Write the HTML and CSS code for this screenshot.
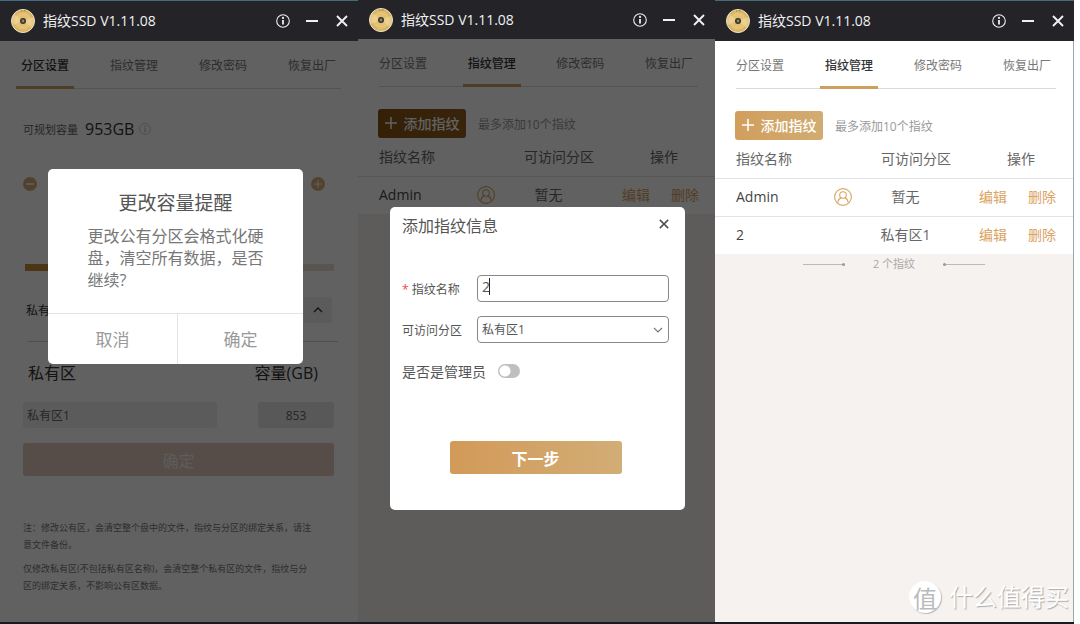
FILE: index.html
```html
<!DOCTYPE html>
<html lang="zh-CN">
<head>
<meta charset="utf-8">
<meta name="viewport" content="width=device-width, initial-scale=1">
<title>指纹SSD V1.11.08</title>
<link rel="stylesheet" href="styles.css">
</head>
<body>
<svg class="sprite" aria-hidden="true">
  <defs>
    <radialGradient id="gold" cx="50%" cy="50%" r="50%">
      <stop offset="0" stop-color="#d9b566"/><stop offset=".6" stop-color="#e6c679"/><stop offset="1" stop-color="#d2a95a"/>
    </radialGradient>
    <symbol id="disc" viewBox="0 0 24 24">
      <circle cx="12" cy="12" r="11.5" fill="url(#gold)" stroke="#f1e6cb"/>
      <path d="M12 12 3 5a12 12 0 0 0-1 11zM12 12l9 7a12 12 0 0 0 1-11z" fill="#f6e3ae" opacity=".45"/>
      <circle cx="12" cy="12" r="3" fill="#3a3328"/>
      <circle cx="12" cy="12" r="1.4" fill="#8d8778"/>
      <path d="M10 2h1M12.5 1.8h2" stroke="#8b6b2b" stroke-width=".8"/>
    </symbol>
    <symbol id="info" viewBox="0 0 14 14">
      <circle cx="7" cy="7" r="6.3" fill="none" stroke="currentColor" stroke-width="1.1"/>
      <path d="M7 6v4.6" fill="none" stroke="currentColor" stroke-width="1.8"/>
      <circle cx="7" cy="3.9" r="1.1" fill="currentColor"/>
    </symbol>
    <symbol id="min" viewBox="0 0 12 12"><path d="M0 6h12" stroke="currentColor" stroke-width="2"/></symbol>
    <symbol id="close" viewBox="0 0 12 12"><path d="m1 1 10 10M11 1 1 11" stroke="currentColor" stroke-width="1.9"/></symbol>
    <symbol id="plus" viewBox="0 0 12 12"><path d="M0 6h12M6 0v12" stroke="currentColor" stroke-width="1.5"/></symbol>
    <symbol id="user" viewBox="0 0 18 18">
      <g fill="none" stroke="currentColor" stroke-width="1.1">
        <circle cx="9" cy="9" r="8.4"/><circle cx="9" cy="7" r="3.3"/>
        <path d="M3.8 14.6c.3-2.6 1.8-4.2 3.6-4.7M14.2 14.6c-.3-2.6-1.8-4.2-3.6-4.7"/>
      </g>
    </symbol>
  </defs>
</svg>
<main class="board">

  <section class="window window-strip">
    <header class="titlebar">
      <svg class="logo"><use href="#disc"/></svg>
      <h1 class="app-name">指纹SSD V1.11.08</h1>
      <button class="win-btn" aria-label="关于"><svg class="i14"><use href="#info"/></svg></button>
      <button class="win-btn" aria-label="最小化"><svg class="i12"><use href="#min"/></svg></button>
      <button class="win-btn" aria-label="关闭"><svg class="i12"><use href="#close"/></svg></button>
    </header>
    <div class="content">
      <nav class="tabs">
        <a class="tab active" href="#">分区设置</a><a class="tab" href="#">指纹管理</a><a class="tab" href="#">修改密码</a><a class="tab" href="#">恢复出厂</a>
      </nav>
      <div class="settings">
        <p class="capacity"><span class="capacity-label">可规划容量</span><span class="capacity-value">953GB</span><svg class="capacity-info"><use href="#info"/></svg></p>
        <div class="stepper">
          <button class="round" aria-label="减少"><svg class="i8"><use href="#min"/></svg></button>
          <button class="round" aria-label="增加"><svg class="i8"><use href="#plus"/></svg></button>
        </div>
        <input class="slider" type="range" min="0" max="953" value="100" aria-label="公有区容量">
        <div class="fold">
          <span>私有</span>
          <button class="fold-btn" aria-label="收起"><svg class="i10" viewBox="0 0 10 10"><path d="m1 7 4-4 4 4" fill="none" stroke="currentColor" stroke-width="1.4"/></svg></button>
        </div>
        <div class="pair pair-head"><span>私有区</span><span>容量(GB)</span></div>
        <div class="pair">
          <input class="box" type="text" value="私有区1" aria-label="私有区名称">
          <input class="box box-num" type="text" value="853" aria-label="容量(GB)">
        </div>
        <button class="submit">确定</button>
        <div class="notes">
          <p>注：修改公有区，会清空整个盘中的文件，指纹与分区的绑定关系，请注<br>意文件备份。</p>
          <p>仅修改私有区(不包括私有区名称)，会清空整个私有区的文件，指纹与分<br>区的绑定关系，不影响公有区数据。</p>
        </div>
      </div>
      <div class="shade"></div>
      <div class="dialog confirm" role="dialog" aria-labelledby="confirm-title">
        <h2 class="confirm-title" id="confirm-title">更改容量提醒</h2>
        <p class="confirm-text">更改公有分区会格式化硬盘，清空所有数据，是否继续?</p>
        <div class="confirm-actions"><button class="flat">取消</button><button class="flat">确定</button></div>
      </div>
    </div>
  </section>

  <section class="window">
    <header class="titlebar">
      <svg class="logo"><use href="#disc"/></svg>
      <h1 class="app-name">指纹SSD V1.11.08</h1>
      <button class="win-btn" aria-label="关于"><svg class="i14"><use href="#info"/></svg></button>
      <button class="win-btn" aria-label="最小化"><svg class="i12"><use href="#min"/></svg></button>
      <button class="win-btn" aria-label="关闭"><svg class="i12"><use href="#close"/></svg></button>
    </header>
    <div class="content content-list">
      <div class="sheet">
        <nav class="tabs">
          <a class="tab" href="#">分区设置</a><a class="tab active" href="#">指纹管理</a><a class="tab" href="#">修改密码</a><a class="tab" href="#">恢复出厂</a>
        </nav>
        <div class="toolbar"><button class="add add-pressed"><svg class="i12"><use href="#plus"/></svg>添加指纹</button><span class="hint">最多添加10个指纹</span></div>
        <table class="prints">
          <thead><tr><th class="c-name">指纹名称</th><th class="c-role"></th><th class="c-zone">可访问分区</th><th class="c-ops">操作</th></tr></thead>
          <tbody>
            <tr><td class="c-name">Admin</td><td class="c-role"><svg class="i18"><use href="#user"/></svg></td><td class="c-zone">暂无</td><td class="c-ops"><a class="op" href="#">编辑</a><a class="op" href="#">删除</a></td></tr>
          </tbody>
        </table>
      </div>
      <div class="shade"></div>
      <form class="dialog editor" role="dialog" aria-labelledby="editor-title">
        <div class="editor-head"><h2 class="editor-title" id="editor-title">添加指纹信息</h2><button class="editor-close" type="button" aria-label="关闭"><svg class="i10"><use href="#close"/></svg></button></div>
        <div class="field"><label class="field-label" for="fp-name"><span class="star">*</span> 指纹名称</label><span class="control"><input class="entry" id="fp-name" type="text" value="2"><span class="caret"></span></span></div>
        <div class="field"><label class="field-label" for="fp-zone">可访问分区</label><span class="control"><select class="entry" id="fp-zone"><option>私有区1</option></select><svg class="chevron" viewBox="0 0 10 10"><path d="m1 3 4 4 4-4" fill="none" stroke="currentColor" stroke-width="1.1"/></svg></span></div>
        <div class="field field-admin"><label for="fp-admin">是否是管理员</label><input class="switch" id="fp-admin" type="checkbox" role="switch"></div>
        <button class="next" type="button">下一步</button>
      </form>
    </div>
  </section>

  <section class="window window-strip">
    <header class="titlebar">
      <svg class="logo"><use href="#disc"/></svg>
      <h1 class="app-name">指纹SSD V1.11.08</h1>
      <button class="win-btn" aria-label="关于"><svg class="i14"><use href="#info"/></svg></button>
      <button class="win-btn" aria-label="最小化"><svg class="i12"><use href="#min"/></svg></button>
      <button class="win-btn" aria-label="关闭"><svg class="i12"><use href="#close"/></svg></button>
    </header>
    <div class="content content-list content-edge">
      <div class="sheet">
        <nav class="tabs">
          <a class="tab" href="#">分区设置</a><a class="tab active" href="#">指纹管理</a><a class="tab" href="#">修改密码</a><a class="tab" href="#">恢复出厂</a>
        </nav>
        <div class="toolbar"><button class="add"><svg class="i12"><use href="#plus"/></svg>添加指纹</button><span class="hint">最多添加10个指纹</span></div>
        <table class="prints">
          <thead><tr><th class="c-name">指纹名称</th><th class="c-role"></th><th class="c-zone">可访问分区</th><th class="c-ops">操作</th></tr></thead>
          <tbody>
            <tr><td class="c-name">Admin</td><td class="c-role"><svg class="i18"><use href="#user"/></svg></td><td class="c-zone">暂无</td><td class="c-ops"><a class="op" href="#">编辑</a><a class="op" href="#">删除</a></td></tr>
            <tr><td class="c-name">2</td><td class="c-role"></td><td class="c-zone">私有区1</td><td class="c-ops"><a class="op" href="#">编辑</a><a class="op" href="#">删除</a></td></tr>
          </tbody>
        </table>
      </div>
      <p class="count"><span class="rule rule-left"></span><span>2 个指纹</span><span class="rule rule-right"></span></p>
      <div class="watermark"><span class="seal">值</span><span>什么值得买</span></div>
    </div>
  </section>
</main>
</body>
</html>
```
FILE: styles.css
```css
* { box-sizing: border-box; }
body, h1, h2, p { margin: 0; }
body {
  background: #fff;
  color: #666;
  font-family: "Open Sans", "Noto Sans CJK SC", sans-serif;
  font-size: 12px;
}
button, input, select { font: inherit; color: inherit; border: 0; margin: 0; padding: 0; background: none; }
a { color: inherit; text-decoration: none; }
svg { display: block; flex: none; }
.sprite { position: absolute; width: 0; height: 0; }
.i8 { width: 8px; height: 8px; }
.i10 { width: 10px; height: 10px; }
.i12 { width: 12px; height: 12px; }
.i14 { width: 14px; height: 14px; }
.i18 { width: 18px; height: 18px; }

.board {
  display: grid;
  grid-template-columns: 358fr 357fr 359fr;
  min-height: 100vh;
  padding-right: 6px;
}
.window { display: flex; flex-direction: column; border-bottom: 2px solid #171b20; }
.window-strip { border-top: 1px solid #45697d; }

.titlebar {
  display: flex;
  align-items: center;
  height: 39px;
  padding: 0 10px 0 11px;
  background: #232328;
  color: #f1f1f1;
}
.window-strip .titlebar { height: 40px; }
.logo { width: 24px; height: 24px; }
.app-name { flex: 1; margin-left: 8px; font-size: 14px; font-weight: 400; line-height: 20px; white-space: nowrap; }
.win-btn { display: grid; place-items: center; width: 12px; height: 20px; margin-left: 18px; }

.content { position: relative; flex: 1; background: #fff; }
.content-list { background: #f5f2f0; }
.content-edge { border-right: 1px solid #9aa7ad; }
.sheet { background: #fff; }

.tabs {
  display: flex;
  justify-content: space-between;
  margin: 0 17px 0 16px;
  height: 48px;
  background: linear-gradient(#d9d9d9, #d9d9d9) right bottom / calc(100% - 5px) 1px no-repeat;
}
.tab { padding: 15px 5px 0; line-height: 20px; border-bottom: 3px solid transparent; color: #777; }
.tab.active { border-color: #cf9f5f; color: #333; font-weight: 500; }

.settings { padding: 0 24px 0 23px; }
.capacity { display: flex; align-items: center; gap: 7px; height: 24px; margin-top: 28px; }
.capacity-label { font-size: 11px; }
.capacity-value { font-size: 16px; color: #333; }
.capacity-info { width: 12px; height: 12px; margin-left: -2px; color: #ccc; }
.stepper { display: flex; justify-content: space-between; margin-top: 36px; padding-right: 9px; }
.round { display: grid; place-items: center; width: 14px; height: 14px; border-radius: 50%; background: #d8ae78; color: #fff; }
.slider {
  appearance: none;
  display: block;
  width: calc(100% - 2px);
  height: 7px;
  margin: 73px 0 0 2px;
  background: linear-gradient(90deg, #c98a3c 35%, #e6dcd2 35%);
}
.slider::-webkit-slider-thumb { appearance: none; width: 1px; height: 7px; }
.fold { display: flex; align-items: center; justify-content: space-between; height: 26px; margin: 26px 3px 0; color: #333; }
.fold-btn { display: grid; place-items: center; width: 28px; height: 26px; margin-right: -1px; border-radius: 3px; background: #eee; }
.pair { display: flex; justify-content: space-between; margin-top: 17px; }
.pair-head { margin: 18px -4px 0 5px; padding: 19px 20px 0 0; border-top: 1px solid #ccc; font-size: 16px; line-height: 24px; color: #333; }
.box { width: 194px; height: 26px; padding-left: 4px; border-radius: 3px; background: #f0f0f0; }
.box-num { width: 76px; padding: 0; background: #e6e6e6; text-align: center; }
.submit { width: 100%; height: 33px; margin-top: 15px; border-radius: 3px; background: #e2cabd; font-size: 16px; color: #f6f1ee; }
.notes { margin-top: 43px; font-size: 9px; line-height: 17px; white-space: nowrap; color: #777; }
.notes p + p { margin-top: 7px; }

.shade { position: absolute; inset: 0; background: rgba(0, 0, 0, 0.62); }
.dialog { position: absolute; border-radius: 5px; background: #fff; }

.confirm { top: 128px; left: 48px; width: 255px; text-align: center; }
.confirm-title { padding-top: 21px; font-size: 19px; font-weight: 400; line-height: 26px; color: #555; }
.confirm-text { width: 176px; margin: 9px auto 22px; font-size: 16px; line-height: 22px; text-align: left; color: #777; }
.confirm-actions { display: grid; grid-template-columns: 129fr 126fr; border-top: 1px solid #e4e4e4; }
.flat { height: 50px; padding-bottom: 2px; font-size: 17px; color: #999; }
.flat + .flat { border-left: 1px solid #e4e4e4; }

.toolbar { display: flex; align-items: center; gap: 12px; margin-top: 22px; padding-left: 20px; }
.add {
  display: flex;
  align-items: center;
  justify-content: center;
  gap: 7px;
  width: 88px;
  height: 29px;
  padding-bottom: 1px;
  border-radius: 3px;
  background: linear-gradient(90deg, #d29e5c, #d1ac72);
  font-size: 14px;
  font-weight: 500;
  color: #fff;
}
.add-pressed { background: linear-gradient(90deg, #8a5613, #925f20); }
.hint { color: #999; }

.prints { width: 100%; table-layout: fixed; border-collapse: collapse; font-size: 14px; line-height: 20px; }
.prints th, .prints td { height: 38px; padding: 0; text-align: left; font-weight: 400; border-bottom: 1px solid #e3e3e3; }
.prints tr:last-child td { border-bottom: 0; }
.prints .c-name { width: 119px; padding-left: 21px; }
.prints td.c-name { color: #444; }
.prints .c-role { width: 34px; color: #d9a560; }
.prints .c-zone { width: 75px; }
.prints th.c-zone { padding-left: 13px; white-space: nowrap; }
.prints td.c-zone { text-align: center; }
.prints th.c-ops { padding-left: 64px; }
.prints td.c-ops { padding-left: 36px; }
.op { color: #dba261; }
.op + .op { margin-left: 21px; }

.count { display: flex; align-items: center; justify-content: center; gap: 28px; padding-top: 1px; font-size: 11px; line-height: 18px; color: #aaa; }
.rule { position: relative; width: 42px; height: 1px; background: #bbb; }
.rule::after { content: ""; position: absolute; top: -1px; width: 3px; height: 3px; border-radius: 50%; background: #999; }
.rule-left::after { right: 0; }
.rule-right::after { left: 0; }

.editor { top: 168px; left: 32px; width: 295px; padding: 7px 16px 36px 12px; color: #555; }
.editor-head { display: flex; align-items: center; justify-content: space-between; margin-bottom: 37px; }
.editor-title { font-size: 16px; font-weight: 400; line-height: 24px; }
.editor-close { padding-bottom: 4px; }
.field { display: flex; align-items: center; justify-content: space-between; height: 27px; margin-bottom: 14px; white-space: nowrap; }
.star { color: #f04a4a; }
.control { position: relative; width: 192px; }
.entry { appearance: none; display: block; width: 100%; height: 27px; padding: 0 4px; border: 1px solid #888; border-radius: 4px; background: #fff; }
input.entry { padding-bottom: 4px; font-size: 14px; }
.caret { position: absolute; top: 3px; left: 12px; width: 1px; height: 17px; background: #222; }
.chevron { position: absolute; top: 9px; right: 6px; width: 10px; height: 10px; color: #777; }
.field-admin { justify-content: flex-start; gap: 12px; margin-bottom: 57px; font-size: 14px; }
.switch { appearance: none; width: 22px; height: 14px; border-radius: 7px; background: radial-gradient(circle at 7px 7px, #fff 5px, #bfbfbf 6px); }
.next { display: block; width: 172px; height: 33px; margin: 0 auto; border-radius: 3px; background: linear-gradient(90deg, #d29a58, #d2ad76); font-size: 16px; font-weight: 700; color: #fff; }

.watermark {
  position: absolute;
  right: 4px;
  bottom: 7px;
  display: flex;
  align-items: center;
  gap: 8px;
  font-size: 24px;
  line-height: 36px;
  color: #fff;
  text-shadow: 1px 1px 1px #aaa;
  white-space: nowrap;
}
.seal { display: grid; place-items: center; width: 32px; height: 32px; border-radius: 50%; background: #fff; box-shadow: 1px 1px 1px #bbb; color: #bbb; text-shadow: none; }
```
